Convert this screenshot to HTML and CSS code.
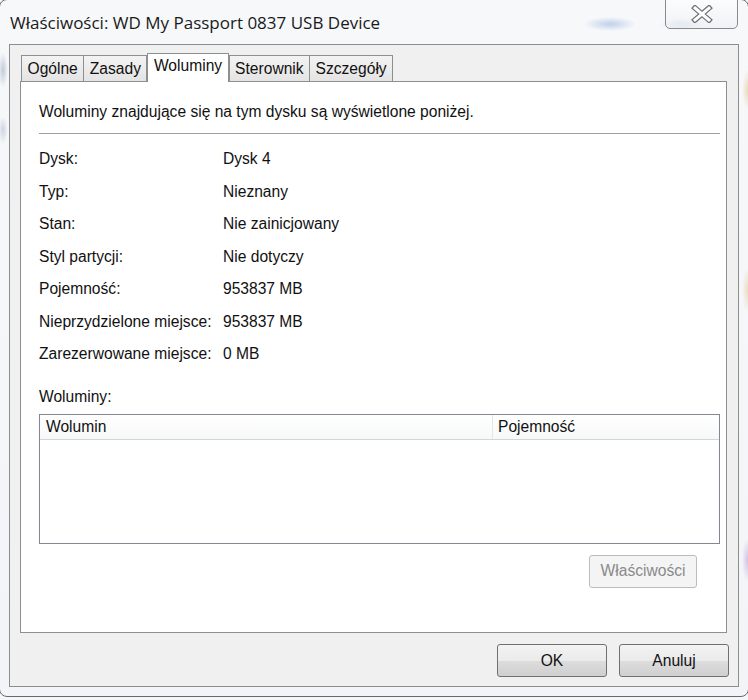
FILE: index.html
```html
<!DOCTYPE html>
<html lang="pl">
<head>
    <meta charset="UTF-8">
    <meta name="viewport" content="width=device-width, initial-scale=1.0">
    <title>Właściwości: WD My Passport 0837 USB Device</title>
    <link rel="stylesheet" href="styles.css">
</head>
<body>
    <div class="window">
        <div class="titlebar">
            <span class="title">Właściwości: WD My Passport 0837 USB Device</span>
            <button class="close" title="Zamknij">
                <svg width="22" height="18" viewBox="0 0 22 18">
                    <path d="M4 3 L18 15 M18 3 L4 15" stroke="#707070" stroke-width="5.5" stroke-linecap="square" fill="none"/>
                    <path d="M4 3 L18 15 M18 3 L4 15" stroke="#ffffff" stroke-width="3" stroke-linecap="square" fill="none"/>
                </svg>
            </button>
        </div>

        <div class="client">
            <div class="tabs">
                <span class="tab">Ogólne</span>
                <span class="tab">Zasady</span>
                <span class="tab active">Woluminy</span>
                <span class="tab">Sterownik</span>
                <span class="tab">Szczegóły</span>
            </div>

            <div class="page">
                <p class="intro">Woluminy znajdujące się na tym dysku są wyświetlone poniżej.</p>
                <hr class="sep">

                <div class="info">
                    <span>Dysk:</span><span>Dysk 4</span>
                    <span>Typ:</span><span>Nieznany</span>
                    <span>Stan:</span><span>Nie zainicjowany</span>
                    <span>Styl partycji:</span><span>Nie dotyczy</span>
                    <span>Pojemność:</span><span>953837 MB</span>
                    <span>Nieprzydzielone miejsce:</span><span>953837 MB</span>
                    <span>Zarezerwowane miejsce:</span><span>0 MB</span>
                </div>

                <div class="list-label">Woluminy:</div>
                <div class="list">
                    <div class="list-head">
                        <span class="col-name">Wolumin</span>
                        <span class="col-size">Pojemność</span>
                    </div>
                </div>

                <div class="page-actions">
                    <button class="btn btn-props" disabled>Właściwości</button>
                </div>
            </div>

            <div class="actions">
                <button class="btn">OK</button>
                <button class="btn">Anuluj</button>
            </div>
        </div>
    </div>
</body>
</html>
```

FILE: styles.css
```css
body {
    margin: 0;
    background: #f4f6f8;
    font-family: "Liberation Sans", Arial, sans-serif;
    font-size: 15.6px;
    color: #111;
    overflow: hidden;
}

/* glass frame of the dialog */
.window {
    width: 750px;
    height: 698px;
    margin-left: -1px;
    margin-top: -1px;
    box-sizing: border-box;
    border: 1px solid #6a6a6a;
    border-radius: 8px;
    display: flex;
    flex-direction: column;
    background:
        radial-gradient(ellipse 26px 7px at 610px 24px, rgba(120, 160, 215, 0.45), transparent),
        radial-gradient(ellipse 22px 6px at 682px 24px, rgba(150, 175, 210, 0.35), transparent),
        radial-gradient(ellipse 5px 18px at 3px 70px, rgba(130, 150, 180, 0.45), transparent),
        radial-gradient(ellipse 5px 14px at 3px 130px, rgba(130, 150, 180, 0.35), transparent),
        radial-gradient(ellipse 6px 20px at 748px 90px, rgba(215, 190, 120, 0.5), transparent),
        radial-gradient(ellipse 6px 22px at 748px 290px, rgba(215, 190, 120, 0.45), transparent),
        radial-gradient(ellipse 6px 22px at 748px 560px, rgba(175, 140, 215, 0.5), transparent),
        linear-gradient(#f7f8fa, #f2f4f7);
}

.titlebar {
    height: 44px;
    flex: none;
    display: flex;
    justify-content: space-between;
    align-items: flex-start;
    padding: 0 10px 0 10px;
}

.title {
    align-self: center;
    font-family: "Open Sans", "Noto Sans", sans-serif;
    font-size: 17px;
    color: #1a1a1a;
    margin-top: 1px;
}

.close {
    width: 73px;
    height: 30px;
    margin-top: -1px;
    padding: 0;
    border: 1px solid #8a8a8a;
    border-radius: 0 0 5px 5px;
    background: linear-gradient(rgba(255, 255, 255, 0.6), rgba(235, 238, 242, 0.6));
    display: flex;
    align-items: center;
    justify-content: center;
}

.client {
    flex: none;
    height: 643px;
    box-sizing: border-box;
    margin: 0 9px 0 9px;
    border: 1px solid #8d8d8d;
    background: #f0f0f0;
    padding: 10px 0 0 10px;
}

/* tab strip */
.tabs {
    display: flex;
    align-items: flex-end;
    height: 26px;
    padding-left: 1px;
    position: relative;
    z-index: 1;
}

.tab {
    height: 26px;
    box-sizing: border-box;
    padding: 3px 5.5px 0 5.5px;
    border: 1px solid #8e8f8f;
    border-bottom: none;
    margin-right: -1px;
    background: linear-gradient(#f3f3f3, #e4e4e4);
    line-height: 20px;
}

.tab.active {
    height: 29px;
    margin-bottom: -1px;
    margin-left: 1px;
    margin-right: 0;
    padding-top: 2px;
    background: #fff;
}

.page {
    height: 552px;
    box-sizing: border-box;
    margin-right: 11px;
    border: 1px solid #8e8f8f;
    background: #fff;
    padding: 20px 6px 0 18px;
}

.intro {
    margin: 0;
    line-height: 20px;
}

.sep {
    margin: 11px 0 0 0;
    border: none;
    border-top: 1px solid #a0a0a0;
    height: 0;
}

.info {
    display: grid;
    grid-template-columns: 184px 1fr;
    grid-auto-rows: 32.5px;
    align-items: center;
    margin-top: 9px;
}

.list-label {
    line-height: 20px;
    margin-top: 16px;
}

.list {
    margin-top: 7px;
    height: 130px;
    box-sizing: border-box;
    border: 1px solid #828790;
}

.list-head {
    display: flex;
    height: 25px;
    box-sizing: border-box;
    border-bottom: 1px solid #d5d5d5;
    background: linear-gradient(#ffffff, #f7f8f9);
    line-height: 24px;
}

.col-name {
    width: 446px;
    padding-left: 6px;
    border-right: 1px solid #e3e5e7;
}

.col-size {
    padding-left: 5px;
    flex: 1;
}

.page-actions {
    display: flex;
    justify-content: flex-end;
    margin-top: 11px;
    padding-right: 23px;
}

.btn {
    width: 110px;
    height: 33px;
    font-family: "Liberation Sans", Arial, sans-serif;
    font-size: 15.6px;
    color: #111;
    border: 1px solid #707070;
    border-radius: 3px;
    background: linear-gradient(#f2f2f2 0%, #ebebeb 50%, #dddddd 51%, #cfcfcf 100%);
    padding: 0;
}

.btn-props {
    width: 108px;
    color: #8a8a8a;
    border-color: #bcbcbc;
    background: #f4f4f4;
}

.actions {
    display: flex;
    justify-content: flex-end;
    gap: 12px;
    margin-top: 11px;
    padding-right: 9px;
}
```
